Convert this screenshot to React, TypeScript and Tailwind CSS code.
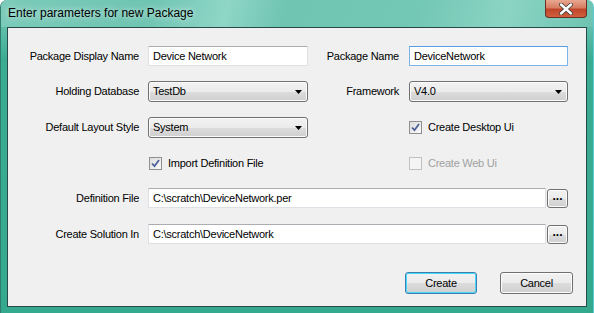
import React from "react";

const FONT = "font-['Liberation_Sans',Arial,sans-serif] text-[11px] tracking-[-0.25px] text-black";

function TextBox({ value, width, focused }: { value: string; width: string; focused?: boolean }) {
  return (
    <div
      className={`${width} h-[20px] flex items-center bg-white pl-[4px] border ${
        focused ? "border-[#7eb4ea] border-t-[#569de5]" : "border-[#dde1e6] border-t-[#abadb3]"
      }`}
    >
      <span className="leading-none">{value}</span>
    </div>
  );
}

function ComboBox({ value, width }: { value: string; width: string }) {
  return (
    <div
      className={`${width} h-[21px] flex items-center justify-between rounded-[3px] border border-[#707070] bg-[linear-gradient(to_bottom,#f2f2f2_0%,#ebebeb_50%,#dddddd_50%,#cfcfcf_100%)] pl-[4px] pr-[5px] shadow-[inset_0_0_0_1px_#fbfbfb]`}
    >
      <span className="leading-none">{value}</span>
      <svg width="7" height="4" viewBox="0 0 7 4">
        <path d="M0 0h7L3.5 4z" fill="#000" />
      </svg>
    </div>
  );
}

function CheckBox({ label, checked, disabled }: { label: string; checked?: boolean; disabled?: boolean }) {
  return (
    <div className="flex items-center gap-[6px]">
      <div
        className={`w-[13px] h-[13px] border flex items-center justify-center ${
          disabled
            ? "border-[#c0c0c0] bg-[#f4f4f4]"
            : "border-[#8f8f8f] bg-[linear-gradient(135deg,#dcdcdc,#fafafa)]"
        }`}
      >
        {checked && (
          <svg width="9" height="9" viewBox="0 0 9 9">
            <path d="M1 4.5l2.5 2.7L8 1" stroke="#4a5f97" strokeWidth="1.8" fill="none" />
          </svg>
        )}
      </div>
      <span className={disabled ? "text-[#a0a0a0]" : ""}>{label}</span>
    </div>
  );
}

function PushButton({
  children,
  width,
  height,
  isDefault,
  dots,
}: {
  children: React.ReactNode;
  width: string;
  height: string;
  isDefault?: boolean;
  dots?: boolean;
}) {
  return (
    <button
      type="button"
      className={`${width} ${height} flex items-center justify-center rounded-[3px] border bg-[linear-gradient(to_bottom,#f2f2f2_0%,#ebebeb_50%,#dddddd_50%,#cfcfcf_100%)] ${
        isDefault
          ? "border-[#3c7fb1] shadow-[inset_0_0_0_1px_#48d8fb]"
          : "border-[#707070] shadow-[inset_0_0_0_1px_#fcfcfc]"
      } ${dots ? "font-bold text-[12px] tracking-[0px] leading-none pb-[4px]" : ""}`}
    >
      {children}
    </button>
  );
}

function Label({ children, width }: { children: React.ReactNode; width: string }) {
  return <div className={`${width} shrink-0 text-right`}>{children}</div>;
}

export default function App() {
  return (
    <div className="w-[594px] h-[313px] flex flex-col rounded-t-[7px] overflow-hidden bg-[linear-gradient(to_bottom,#6fc5b3_0px,#5dbda8_30px,#3aac92_60px,#35a98d_100%)] border-l border-l-[#2f7d6d] border-r border-r-[#5bcbd6]">
      <div className="h-[27px] shrink-0 flex items-start justify-between pl-[7px] pr-[6px] bg-[linear-gradient(105deg,#7ccbba_0%,#6fc4b2_25%,#8fd6c7_38%,#6fc4b2_48%,#73c7b5_70%,#8bd4c4_85%,#6ec3b1_100%)]">
        <div className="pt-[4px] font-['Liberation_Sans',Arial,sans-serif] text-[12px] text-black [text-shadow:0_0_6px_rgba(255,255,255,0.9)]">
          Enter parameters for new Package
        </div>
        <div className="w-[42px] h-[18px] flex items-center justify-center rounded-b-[4px] border border-t-0 border-[#6b2f22] bg-[linear-gradient(to_bottom,#e9a891_0%,#d87d62_45%,#c0452a_55%,#d0613e_100%)]">
          <svg width="14" height="12" viewBox="0 0 14 12">
            <path d="M2 1.5L12 10.5M12 1.5L2 10.5" stroke="#3b3b3b" strokeWidth="4" strokeLinecap="round" />
            <path d="M2 1.5L12 10.5M12 1.5L2 10.5" stroke="#ffffff" strokeWidth="2.4" strokeLinecap="round" />
          </svg>
        </div>
      </div>
      <div className="flex-1 flex px-[6px] pb-[6px]">
        <div className={`flex-1 flex flex-col border border-[#27494a] bg-[#f0f0f0] pt-[18px] ${FONT}`}>
          <div className="flex items-center h-[20px]">
            <Label width="w-[131px]">Package Display Name</Label>
            <div className="ml-[9px]">
              <TextBox value="Device Network" width="w-[160px]" />
            </div>
            <Label width="w-[91px]">Package Name</Label>
            <div className="ml-[10px]">
              <TextBox value="DeviceNetwork" width="w-[159px]" focused />
            </div>
          </div>

          <div className="flex items-center h-[21px] mt-[15px]">
            <Label width="w-[131px]">Holding Database</Label>
            <div className="ml-[9px]">
              <ComboBox value="TestDb" width="w-[160px]" />
            </div>
            <Label width="w-[91px]">Framework</Label>
            <div className="ml-[10px]">
              <ComboBox value="V4.0" width="w-[159px]" />
            </div>
          </div>

          <div className="flex items-center h-[21px] mt-[15px]">
            <Label width="w-[131px]">Default Layout Style</Label>
            <div className="ml-[9px]">
              <ComboBox value="System" width="w-[160px]" />
            </div>
            <div className="ml-[101px]">
              <CheckBox label="Create Desktop Ui" checked />
            </div>
          </div>

          <div className="flex items-center h-[20px] mt-[15px]">
            <div className="ml-[141px] w-[260px]">
              <CheckBox label="Import Definition File" checked />
            </div>
            <CheckBox label="Create Web Ui" disabled />
          </div>

          <div className="flex items-center h-[20px] mt-[15px]">
            <Label width="w-[131px]">Definition File</Label>
            <div className="ml-[9px]">
              <TextBox value="C:\scratch\DeviceNetwork.per" width="w-[398px]" />
            </div>
            <div className="ml-[1px]">
              <PushButton width="w-[21px]" height="h-[19px]" dots>
                ...
              </PushButton>
            </div>
          </div>

          <div className="flex items-center h-[20px] mt-[16px]">
            <Label width="w-[131px]">Create Solution In</Label>
            <div className="ml-[9px]">
              <TextBox value="C:\scratch\DeviceNetwork" width="w-[398px]" />
            </div>
            <div className="ml-[1px]">
              <PushButton width="w-[21px]" height="h-[19px]" dots>
                ...
              </PushButton>
            </div>
          </div>

          <div className="flex justify-end gap-[23px] mt-[28px] pr-[13px]">
            <PushButton width="w-[72px]" height="h-[22px]" isDefault>
              Create
            </PushButton>
            <PushButton width="w-[73px]" height="h-[22px]">
              Cancel
            </PushButton>
          </div>
        </div>
      </div>
    </div>
  );
}
